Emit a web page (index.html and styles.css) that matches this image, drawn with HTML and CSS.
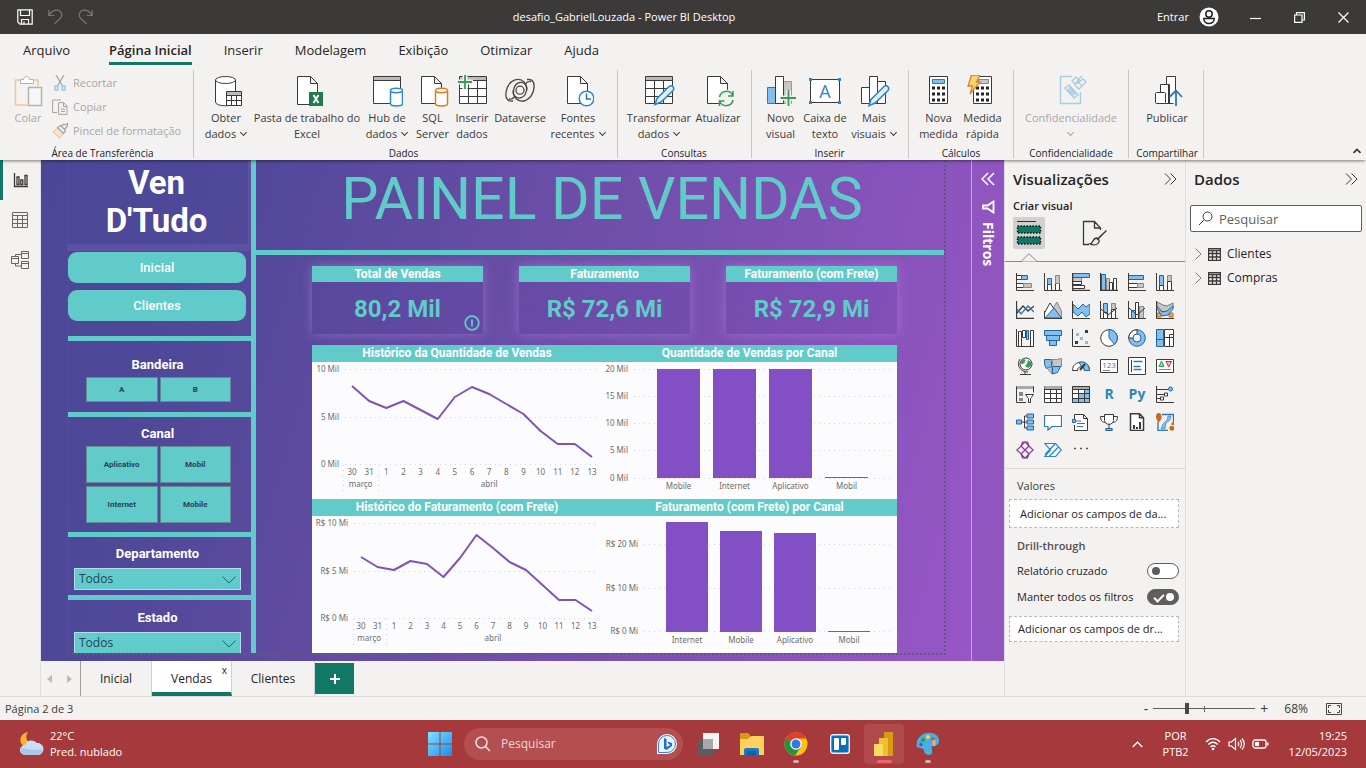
FILE: index.html
```html
<!DOCTYPE html>
<html lang="pt-BR">
<head>
<meta charset="utf-8">
<meta name="viewport" content="width=device-width, initial-scale=1">
<title>desafio_GabrielLouzada - Power BI Desktop</title>
<link rel="stylesheet" href="styles.css">
</head>
<body>
<header class="titlebar">
  <div class="quick">
    <button aria-label="Salvar"><svg width="16" height="16" viewBox="0 0 16 16"><path class="ln" d="M.8.8h14.4v14.4H3L.8 13zM3.500 1v5.500h9V1M4.500 15v-4.500h7V15M7 15v-2.500"/></svg></button>
    <button class="dim" aria-label="Desfazer"><svg width="15" height="16" viewBox="0 0 15 16"><path class="ln" d="M.8 1v5.500h5.500M1 6.300C3 3 6 .8 9.500 1.200c4 .6 5.500 5 3 8L6.500 15"/></svg></button>
    <button class="dim" aria-label="Refazer"><svg width="15" height="16" viewBox="0 0 15 16"><path class="ln" d="M14.200 1v5.500H8.700M14 6.300C12 3 9 .8 5.500 1.200c-4 .6-5.500 5-3 8L8.500 15"/></svg></button>
  </div>
  <h1 class="doc-title">desafio_GabrielLouzada - Power BI Desktop</h1>
  <div class="account">
    <button class="signin">Entrar
      <svg width="20" height="20" viewBox="0 0 20 20"><circle cx="10" cy="10" r="9.500" fill="#fff"/><circle cx="10" cy="7" r="3.200" fill="none" stroke="#222" stroke-width="1.500"/><path d="M4.800 11.500h10.400c0 3-2.200 5-5.200 5s-5.200-2-5.200-5z" fill="none" stroke="#222" stroke-width="1.500"/></svg>
    </button>
    <button class="win" aria-label="Minimizar"><svg width="11" height="11" viewBox="0 0 11 11"><path class="ln" d="M0 6.500h11"/></svg></button>
    <button class="win" aria-label="Restaurar"><svg width="11" height="11" viewBox="0 0 11 11"><path class="ln" d="M.6 3h7.400v7.400H.6zM2.500 3V.6h7.900V8H8"/></svg></button>
    <button class="win" aria-label="Fechar"><svg width="11" height="11" viewBox="0 0 11 11"><path class="ln" d="M.5.5l10 10M10.500.5l-10 10"/></svg></button>
  </div>
</header>

<nav class="tabs">
  <button class="file">Arquivo</button>
  <button class="on">Página Inicial</button>
  <button>Inserir</button>
  <button>Modelagem</button>
  <button>Exibição</button>
  <button>Otimizar</button>
  <button>Ajuda</button>
</nav>

<section class="ribbon" aria-label="Faixa de opções">
  <div class="group clip">
    <div class="tools">
      <button class="tool off"><svg width="32" height="32" viewBox="0 0 32 32"><path d="M9 5H3.500v25H15M21 5h5v6" fill="none" stroke="#f0c896" stroke-width="1.500"/><path d="M8.500 8.500v-4h3c0-4 6-4 6 0h4v4z" fill="#fff" stroke="#b5b3b1"/><path d="M16.500 12.500h13v18h-13z" fill="#f8f7f7" stroke="#b5b3b1" stroke-width="1.500"/></svg><span>Colar</span></button>
      <div class="small-tools">
        <button><svg width="16" height="16" viewBox="0 0 16 16"><path d="M4 0l6.500 11M12 0L5.500 11" fill="none" stroke="#a5a3a1" stroke-width="1.300"/><path d="M3 11h3v4H3zM10 11h3v4h-3z" fill="#d8eaf6" stroke="#9cc8e4" stroke-width="1.300"/></svg>Recortar</button>
        <button><svg width="16" height="16" viewBox="0 0 16 16"><path d="M5 13.500H.6V1H9M6.600 3.600h5L15 7v8.400H6.600zM11.500 4v3.500H15M9 10h4M9 12.500h4" fill="none" stroke="#a5a3a1"/></svg>Copiar</button>
        <button><svg width="16" height="16" viewBox="0 0 16 16"><path d="M6 5l5 5-3.500 5L1 9z" fill="#f8e5cc" stroke="#e9bd85"/><path d="M5.500 4.500l3-2 5 5-2 3zM9.500 3.500L12 .8M12.500 6.500L15.500 3V.6L12.500 2" fill="none" stroke="#a5a3a1" stroke-width="1.300"/></svg>Pincel de formatação</button>
      </div>
    </div>
    <div class="caption">Área de Transferência</div>
  </div>

  <div class="group data">
    <div class="tools">
      <button class="tool t52"><svg width="32" height="32" viewBox="0 0 32 32"><path class="wk" d="M5.500 5v22c0 5 20 5 20 0V5"/><ellipse class="wk" cx="15.500" cy="5" rx="10" ry="3.500"/><path class="wk" d="M16.500 16.500h15v14h-15z"/><path d="M17 17h14v3H17z" fill="#bbb"/><path class="k" d="M16.500 20.500h15M16.500 25.500h15M21.500 20.500v10M26.500 20.500v10"/></svg><span>Obter<br>dados<i class="chev"></i></span></button>
      <button class="tool t110"><svg width="32" height="32" viewBox="0 0 32 32"><path class="wk" d="M6.500 1.500h13l7 7v21h-20zM19.500 1.500v7h7"/><path d="M18 17h14v14H18z" fill="#1e7d49"/><path d="M22.500 20l5 8M27.500 20l-5 8" stroke="#fff" stroke-width="2" fill="none"/></svg><span>Pasta de trabalho do<br>Excel</span></button>
      <button class="tool t50"><svg width="32" height="32" viewBox="0 0 32 32"><path class="wk" d="M2.500 1.500h27v27h-27z"/><path d="M3 2h26v3H3z" fill="#bbb"/><path class="k" d="M2.500 5.500h27"/><path class="cyl" d="M19.500 16v13c0 2.500 12 2.500 12 0V16"/><ellipse class="cyl" cx="25.500" cy="15.500" rx="6" ry="2.200"/></svg><span>Hub de<br>dados<i class="chev"></i></span></button>
      <button class="tool t41"><svg width="32" height="32" viewBox="0 0 32 32"><path class="wk" d="M4.500 1.500h13l7 7v20h-20zM17.500 1.500v7h7"/><path class="cyl org" d="M18.500 16v13c0 2.500 12 2.500 12 0V16"/><ellipse class="cyl org" cx="24.500" cy="15.500" rx="6" ry="2.200"/></svg><span>SQL<br>Server</span></button>
      <button class="tool t38"><svg width="32" height="32" viewBox="0 0 32 32"><path class="wk" d="M3.500 1.500h27v27h-27z"/><path d="M4 2h26v3H4z" fill="#bbb"/><path class="k" d="M3.500 5.500h27M3.500 13.500h27M3.500 21.500h27M12.500 5.500v23M21.500 5.500v23"/><path d="M9-1v16M1 7h16" stroke="#f3f2f1" stroke-width="5"/><path d="M9 0v14M2 7h14" stroke="#3a9b56" stroke-width="1.800"/></svg><span>Inserir<br>dados</span></button>
      <button class="tool t58"><svg width="32" height="32" viewBox="0 0 32 32"><g fill="none" stroke="#4a4846" stroke-width="1.300"><path d="M9 26C2 27 1 21 2.500 15 5 5 15 1.500 20 7c5 6 2 15-4 16-5 .5-8-4-6.500-8"/><path d="M5 24c5 1 5-3 6-3"/><path d="M23 4.500c7-1 8 5 6.500 11C27 25.500 17 29 12 23.500c-5-6-2-15 4-16 5-.5 8 4 6.500 8"/><path d="M27 6.500c-5-1-5 3-6 3"/><circle cx="16" cy="15.200" r="4"/></g></svg><span>Dataverse</span></button>
      <button class="tool t58"><svg width="32" height="32" viewBox="0 0 32 32"><path class="wk" d="M5.500 1.500h13l7 7v20h-20zM18.500 1.500v7h7"/><circle cx="24.500" cy="23.500" r="7.300" fill="#fff" stroke="#2f86c8" stroke-width="1.500"/><path d="M24.500 18.500v5.500h4.500" fill="none" stroke="#2f6fa0" stroke-width="1.500"/></svg><span>Fontes<br>recentes<i class="chev"></i></span></button>
    </div>
    <div class="caption">Dados</div>
  </div>

  <div class="group query">
    <div class="tools">
      <button class="tool t68"><svg width="32" height="32" viewBox="0 0 32 32"><path class="wk" d="M2.500 1.500h27v27h-27z"/><path d="M3 2h26v3H3z" fill="#bbb"/><path class="k" d="M2.500 5.500h27M2.500 13.500h27M2.500 21.500h27M11.500 5.500v23M20.500 5.500v23"/><path class="pen" d="M12 29.500l2-6 12-12c3-2 6 1 4 4L18 27z"/></svg><span>Transformar<br>dados<i class="chev"></i></span></button>
      <button class="tool t50"><svg width="32" height="32" viewBox="0 0 32 32"><path class="wk" d="M5.500 1.500h13l7 7v20h-20zM18.500 1.500v7h7"/><circle cx="24.500" cy="23.500" r="9" fill="#f3f2f1"/><path d="M17.500 22a7 7 0 0 1 13-2M31 16v5h-5M31 25a7 7 0 0 1-13 2M17.500 31v-5h5" fill="none" stroke="#3a9b56" stroke-width="1.500"/></svg><span>Atualizar</span></button>
    </div>
    <div class="caption">Consultas</div>
  </div>

  <div class="group insert">
    <div class="tools">
      <button class="tool t41"><svg width="32" height="32" viewBox="0 0 32 32"><path d="M2.500 12.500h8v16h-8z" fill="#83beec" stroke="#2f78b4"/><path d="M18.500 6.500h8v22h-8z" fill="#c8c6c4" stroke="#999"/><path class="wk" d="M10.500 1.500h8v27h-8z"/><path d="M23.500 15v16M15.500 23h15" stroke="#f3f2f1" stroke-width="5"/><path d="M23.500 15v16M15.500 23h15.500" stroke="#3a9b56" stroke-width="1.800"/></svg><span>Novo<br>visual</span></button>
      <button class="tool t48"><svg width="32" height="32" viewBox="0 0 32 32"><path class="wk" d="M1.500 4.500h29v23h-29z"/><path d="M0 3h3v3H0zM29 3h3v3h-3zM0 26h3v3H0zM29 26h3v3h-3z" fill="#2f86c8"/><text x="16" y="23" text-anchor="middle" font-size="18" fill="#2f86c8">A</text></svg><span>Caixa de<br>texto</span></button>
      <button class="tool t50"><svg width="32" height="32" viewBox="0 0 32 32"><path class="wk" d="M3.500 12.500h8v16h-8zM19.500 6.500h8v22h-8zM11.500 1.500h8v27h-8z"/><path class="pen" d="M11 30.500l2-6 13-13c3-2 6 1 4 4L17 28z"/></svg><span>Mais<br>visuais<i class="chev"></i></span></button>
    </div>
    <div class="caption">Inserir</div>
  </div>

  <div class="group calc">
    <div class="tools">
      <button class="tool t43"><svg width="32" height="32" viewBox="0 0 32 32"><path class="wk" d="M6.500 1.500h18v27h-18z"/><path d="M9.500 4.500h12v4h-12z" fill="#83beec" stroke="#2f78b4"/><path class="keys" d="M9 13h13M9 19h13M9 25h13"/></svg><span>Nova<br>medida</span></button>
      <button class="tool t45"><svg width="32" height="32" viewBox="0 0 32 32"><path class="wk" d="M6.500 1.500h18v27h-18z"/><path d="M11.500 4.500h10v4h-10z" fill="#c8c6c4" stroke="#888"/><path class="keys" d="M9 13h13M9 19h13M9 25h13"/><path d="M4.500 0H13L9.500 7H13L3 19l2.500-8H1z" fill="#ffd36b" stroke="#d9822b" stroke-width="1.300"/></svg><span>Medida<br>rápida</span></button>
    </div>
    <div class="caption">Cálculos</div>
  </div>

  <div class="group conf">
    <div class="tools">
      <button class="tool off t100"><svg width="32" height="32" viewBox="0 0 32 32"><g fill="none" stroke="#a9cde3" stroke-width="1.400"><path d="M17 1.500H5.500v27h20V17"/><path d="M10 13l4-3 9 10-4 3zM13 14l6 6.500M14 12l6 7"/><path d="M17 6l4-4 3 3-4 4zM22 6l5-5M20 10l4 4 3-3-4-4zM26 12l5-5-3-3-5 4"/></g></svg><span>Confidencialidade<br><i class="chev solo"></i></span></button>
    </div>
    <div class="caption">Confidencialidade</div>
  </div>

  <div class="group share">
    <div class="tools">
      <button class="tool t46"><svg width="32" height="32" viewBox="0 0 32 32"><path class="wk" d="M15.500 1.500h9v27h-7v-19h-2zM9.500 9.500h9v19h-9z"/><rect class="wk" x="4.500" y="17.500" width="10" height="11" rx="1"/><path d="M25 16v15" stroke="#f3f2f1" stroke-width="5"/><path d="M25 31V16M18.500 22l6.500-6.500 6 6.500" fill="none" stroke="#2f78b4" stroke-width="1.800"/></svg><span>Publicar</span></button>
    </div>
    <div class="caption">Compartilhar</div>
  </div>
  <button class="collapse" aria-label="Recolher faixa"><svg width="8" height="6" viewBox="0 0 8 6"><path d="M.5 5L4 1.500 7.500 5" fill="none" stroke="#333" stroke-width="1.600"/></svg></button>
</section>

<div class="work">
  <nav class="rail">
    <button class="on" aria-label="Relatório"><svg width="16" height="16" viewBox="0 0 16 16"><path class="k" stroke-width="1.300" d="M1.500 1v13.500H15M4 5h2v7.500H4zM7.800 8h2v4.500h-2zM12 3.500h2v9h-2z"/></svg></button>
    <button aria-label="Dados"><svg width="16" height="16" viewBox="0 0 16 16"><path fill="none" stroke="#666" d="M.5.5h15v15H.5zM.5 3.500h15M.5 7.500h15M.5 11.500h15M5.500 3.500v12M10.500 3.500v12"/></svg></button>
    <button aria-label="Modelo"><svg width="18" height="18" viewBox="0 0 18 18"><path fill="none" stroke="#666" d="M.5 5.500h7v7h-7zM.5 7.500h7M10.500.5h7v7h-7zM10.500 2.500h7M10.500 10.500h7v7h-7zM10.500 12.500h7M4.500 5.500v-2h6M4.500 12.500v2.500h6"/></svg></button>
  </nav>

  <div class="center">
    <div class="stage">
      <main class="canvas">
        <div class="page">
          <aside class="side">
            <h2 class="brand">Ven<br>D'Tudo</h2>
            <div class="links">
              <button>Inicial</button>
              <button>Clientes</button>
            </div>
            <section class="slicer flag">
              <h3>Bandeira</h3>
              <div class="tiles"><button>A</button><button>B</button></div>
            </section>
            <section class="slicer channel">
              <h3>Canal</h3>
              <div class="tiles tall"><button>Aplicativo</button><button>Mobil</button><button>Internet</button><button>Mobile</button></div>
            </section>
            <section class="slicer dept">
              <h3><label for="dept">Departamento</label></h3>
              <div class="drop"><select id="dept"><option>Todos</option></select><svg width="14" height="8" viewBox="0 0 14 8"><path d="M.5.5L7 7 13.500.5" fill="none" stroke="#2b5f73"/></svg></div>
            </section>
            <section class="slicer state">
              <h3><label for="state">Estado</label></h3>
              <div class="drop"><select id="state"><option>Todos</option></select><svg width="14" height="8" viewBox="0 0 14 8"><path d="M.5.5L7 7 13.500.5" fill="none" stroke="#2b5f73"/></svg></div>
            </section>
          </aside>
          <div class="report">
            <h2 class="headline">PAINEL DE VENDAS</h2>
            <div class="body">
              <div class="cards">
                <article class="card"><h3>Total de Vendas</h3><p>80,2 Mil</p><svg class="info" width="16" height="16" viewBox="0 0 16 16"><circle cx="8" cy="8" r="6.800" fill="none" stroke="#60cbc9" stroke-width="1.800"/><path d="M8 4.500v7" stroke="#60cbc9" stroke-width="1.800"/></svg></article>
                <article class="card"><h3>Faturamento</h3><p>R$ 72,6 Mi</p></article>
                <article class="card"><h3>Faturamento (com Frete)</h3><p>R$ 72,9 Mi</p></article>
              </div>
              <div class="charts">
                <figure><figcaption>Histórico da Quantidade de Vendas</figcaption><svg id="qty-line" viewBox="0 0 290 137"></svg></figure>
                <figure><figcaption>Quantidade de Vendas por Canal</figcaption><svg id="qty-bar" viewBox="0 0 295 137"></svg></figure>
                <figure><figcaption>Histórico do Faturamento (com Frete)</figcaption><svg id="rev-line" viewBox="0 0 290 137"></svg></figure>
                <figure><figcaption>Faturamento (com Frete) por Canal</figcaption><svg id="rev-bar" viewBox="0 0 295 137"></svg></figure>
              </div>
            </div>
          </div>
        </div>
      </main>
      <aside class="filters">
        <button aria-label="Expandir filtros"><svg width="14" height="14" viewBox="0 0 14 14"><path d="M7 1L1 7l6 6M13 1L7 7l6 6" fill="none" stroke="#fff" stroke-width="1.500"/></svg></button>
        <svg width="14" height="14" viewBox="0 0 14 14"><path d="M12.500 1.500v11L6.500 8.500H2v-3h4.500z" fill="none" stroke="#fff" stroke-width="1.800"/></svg>
        <span>Filtros</span>
      </aside>
    </div>
    <nav class="sheets">
      <button class="arrow" aria-label="Anterior"><svg width="5" height="8" viewBox="0 0 5 8"><path d="M5 0v8L0 4z" fill="#bdbbb9"/></svg></button>
      <button class="arrow last" aria-label="Próxima"><svg width="5" height="8" viewBox="0 0 5 8"><path d="M0 0v8l5-4z" fill="#bdbbb9"/></svg></button>
      <button class="sheet first">Inicial</button>
      <button class="sheet on">Vendas<i>x</i></button>
      <button class="sheet">Clientes</button>
      <button class="add" aria-label="Nova página"><svg width="12" height="12" viewBox="0 0 12 12"><path d="M6 1v10M1 6h10" stroke="#fff" stroke-width="2"/></svg></button>
    </nav>
  </div>

  <aside class="pane viz">
    <header><h2>Visualizações</h2><button aria-label="Recolher"><svg width="13" height="12" viewBox="0 0 13 12"><path class="k" d="M1 .5L6.500 6 1 11.500M6.500.5L12 6l-5.500 5.500"/></svg></button></header>
    <h3 class="make">Criar visual</h3>
    <div class="modes">
      <button class="on" aria-label="Criar visual"><svg width="26" height="26" viewBox="0 0 26 26"><path d="M1 1.500h19" stroke="#333"/><path d="M1.500 6h23v7h-23zM1.500 17h23v7h-23z" fill="#117865" stroke="#111" stroke-width="1.400" stroke-dasharray="1.500 1.500"/></svg></button>
      <button aria-label="Formatar visual"><svg width="26" height="26" viewBox="0 0 26 26"><path class="k" stroke-width="1.300" d="M7 24.500H1.500V1.500h11L18.500 8v2M12.500 1.500V8h6M24.500 10.500L15 20M24.500 10.500l-8 7.500M15 18c-5 0-3 5-7 6 5 2 10 0 9-4z"/></svg></button>
    </div>
    <svg class="notch" width="16" height="9" viewBox="0 0 16 9"><path d="M0 8.500L8 .7l8 7.800" fill="#f3f2f1" stroke="#8a8886"/></svg>
    <div class="kinds">
      <button aria-label="Barras empilhadas"><svg viewBox="0 0 18 18"><path class="wk" d="M.5 2.500h5v4h-5zM.5 10.500h7v4h-7z"/><path class="b" d="M5.500 2.500h6v4h-6z"/><path class="g" d="M7.500 10.500h8v4h-8z"/><path class="k" d="M.5 0v17.500H18"/></svg></button>
      <button aria-label="Colunas empilhadas"><svg viewBox="0 0 18 18"><path class="wk" d="M3.500 10.500h4v7h-4zM11.500 9.500h4v8h-4z"/><path class="b" d="M3.500 5.500h4v6h-4z"/><path class="g" d="M11.500 2.500h4v8h-4z"/><path class="k" d="M.5 0v17.500H18"/></svg></button>
      <button aria-label="Barras clusterizadas"><svg viewBox="0 0 18 18"><path class="g" d="M.5 4.500h9v4h-9z"/><path class="b" d="M.5.5h17v4H.5z"/><path class="wk" d="M.5 8.500h9v3h-9zM.5 12.500h12v3H.5z"/><path class="k" d="M.5 0v17.500H18" stroke-width="1.600"/></svg></button>
      <button aria-label="Colunas clusterizadas"><svg viewBox="0 0 18 18"><path class="b" d="M1.500 1.500h4v16h-4z"/><path class="g" d="M6.500 5.500h3v12h-3z"/><path class="wk" d="M9.500 9.500h3v8h-3zM13.500 5.500h3v12h-3z"/><path class="k" d="M.5 0v17.500H18" stroke-width="1.600"/></svg></button>
      <button aria-label="Barras 100%"><svg viewBox="0 0 18 18"><path class="b" d="M.5 2.500h15v4H.5z"/><path class="wk" d="M.5 10.500h9v4h-9z"/><path class="g" d="M9.500 10.500h6v4h-6z"/><path class="k" d="M.5 0v17.500H18"/></svg></button>
      <button aria-label="Colunas 100%"><svg viewBox="0 0 18 18"><path class="b" d="M3.500 2.500h4v10h-4z"/><path class="g" d="M11.500 2.500h4v6h-4z"/><path class="wk" d="M3.500 12.500h4v5h-4zM11.500 8.500h4v9h-4z"/><path class="k" d="M.5 0v17.500H18"/></svg></button>

      <button aria-label="Linhas"><svg viewBox="0 0 18 18"><path class="k" stroke-width="1.300" d="M.5 0v17.500H18M1 12l6-7 5 5 6-5"/><path d="M1 8l4 5 7-8 6 6" fill="none" stroke="#2f78b4" stroke-width="1.400"/></svg></button>
      <button aria-label="Área"><svg viewBox="0 0 18 18"><path class="g" d="M8 8l5-7 4.500 9v7H8z"/><path class="wk" d="M.5 12L6 2l6 9v6H.5z"/><path class="b" d="M1 17l9-10 7.500 10z"/><path class="k" d="M.5 10v7.500H18"/></svg></button>
      <button aria-label="Área empilhada"><svg viewBox="0 0 18 18"><path class="b" d="M1 3l5 5 5-5 3 3 4-3v10l-4 3-4-5-4 4-5-4z"/><path class="k" d="M.5 0v17.500H18"/></svg></button>
      <button aria-label="Linhas e colunas"><svg viewBox="0 0 18 18"><path class="b" d="M3.500 2.500h4v9h-4z"/><path class="g" d="M11.500 2.500h4v6h-4z"/><path class="wk" d="M3.500 11.500h4v6h-4zM11.500 8.500h4v9h-4z"/><path class="k" d="M.5 0v17.500H18M1 8l7 6 9-7"/></svg></button>
      <button aria-label="Linhas e colunas clusterizadas"><svg viewBox="0 0 18 18"><path class="b" d="M3.500 9.500h4v8h-4z"/><path class="g" d="M11.500 5.500h4v12h-4z"/><path class="wk" d="M7.500 1.500h3v16h-3z"/><path class="k" d="M.5 0v17.500H18M1 7l8 7 8-7"/></svg></button>
      <button aria-label="Faixas"><svg viewBox="0 0 18 18"><path d="M1 1l6 3 4 1 6-3v5l-6 5-4-1-6-4z" fill="#c8c6c4" stroke="#777"/><path d="M1 12h4v4H1zM13 12h4v4h-4z" fill="#f5a64f" stroke="#c5691c"/><path class="b" d="M1 5l5 6 5-1 6-5v3l-5 6-6 1-5-7z"/><path class="k" d="M.5 0v17.500H18"/></svg></button>

      <button aria-label="Cascata"><svg viewBox="0 0 18 18"><path class="wk" d="M2.500 2.500h3v15h-3zM6.500 1.500h3v7h-3zM14.500 1.500h3v16h-3z"/><path class="b" d="M10.500 1.500h2v9h-2z"/><path class="k" d="M.5 0v17.500H18"/></svg></button>
      <button aria-label="Funil"><svg viewBox="0 0 18 18"><path class="b" d="M.5 1.500h17v5H.5zM2.500 6.500h13v5h-13zM5.500 11.500h7v5h-7z"/></svg></button>
      <button aria-label="Dispersão"><svg viewBox="0 0 18 18"><path d="M13 1h3v3h-3zM3 12h3v3H3z" fill="#3b3a39"/><path d="M4 4h3v3H4zM8 8h3v3H8zM13 12h3v3h-3z" fill="#8dbbe0"/><path class="k" d="M.5 0v17.500H18"/></svg></button>
      <button aria-label="Pizza"><svg viewBox="0 0 18 18"><circle class="wk" cx="9" cy="9" r="8.300"/><path class="b" d="M9 .7a8.300 8.300 0 0 1 5.500 14.500L9 9z"/></svg></button>
      <button aria-label="Rosca"><svg viewBox="0 0 18 18"><circle class="b" cx="9" cy="9" r="8.300"/><path class="wk" d="M9 .7V5L5 9H.7A8.300 8.300 0 0 1 9 .7z"/><circle cx="9" cy="9" r="4" fill="#f3f2f1" stroke="#2266a0"/></svg></button>
      <button aria-label="Treemap"><svg viewBox="0 0 18 18"><path class="b" d="M.5.5h7v17h-7z"/><path class="wk" d="M8.500.5h9v8h-9zM8.500 8.500h5v9h-5zM13.500 5.500h4v12h-4z"/><path d="M0 10.500h8" stroke="#2266a0"/></svg></button>

      <button aria-label="Mapa"><svg viewBox="0 0 18 18"><circle cx="10" cy="7" r="6" fill="#fff" stroke="#3b3a39"/><path d="M7 2c2 0 3 1 2 3S5 8 5 6s1-3 2-4zM12 3l3 2v4l-3 2-3-2 2-2z" fill="#3a9b56"/><path class="k" d="M4 2C0 8 4 15 12 15M9 15v2.500M4 17.500h11"/></svg></button>
      <button aria-label="Mapa coroplético"><svg viewBox="0 0 18 18"><path class="b" d="M.5 2.500h7v7l-5 2-2-4z"/><path class="g" d="M7.500 2.500h5l5-1v8h-8zM3 11l5-1v7z"/><path class="b" d="M8.500 9.500l8 0-3 6-5 1.500z"/></svg></button>
      <button aria-label="Medidor"><svg viewBox="0 0 18 18"><path class="wk" d="M.5 13.500c0-11 17-11 17 0h-5c0-5-7-5-7 0z"/><path class="b" d="M7 5.500c5-2 10 1 10.500 8h-5c0-2-1-4-3-4z"/><path class="k" stroke-width="2" d="M8 13l5-6"/></svg></button>
      <button aria-label="Cartão"><svg viewBox="0 0 18 18"><path class="wk" d="M.5 2.500h17v13H.5z"/><path d="M3 13.500h7" stroke="#888"/><text x="9" y="11" text-anchor="middle" font-size="8" fill="#2f78b4">123</text></svg></button>
      <button aria-label="Cartão de várias linhas"><svg viewBox="0 0 18 18"><path class="wk" d="M.5.5h17v17H.5z"/><path d="M3.500 3v12" stroke="#3b3a39"/><path d="M5.500 4.500h9M5.500 9.500h7M5.500 12.500h8" stroke="#2f78b4" stroke-width="1.500"/></svg></button>
      <button aria-label="KPI"><svg viewBox="0 0 18 18"><path class="wk" d="M.5 2.500h17v13H.5z"/><path d="M3 9.500L5.500 4 8 9.500z" fill="#9bd0a8" stroke="#3a9b56"/><path d="M10 4.500h5.500L12.700 10z" fill="#f6b8bb" stroke="#d13438"/><path d="M3 12.500h12" stroke="#888"/></svg></button>

      <button aria-label="Segmentação"><svg viewBox="0 0 18 18"><path class="k" d="M10 17.500H.5V1.500h17v6"/><path d="M1 1h16v3H1z" fill="#aaa"/><path d="M3 7h4v4H3zM3 13h4v3H3z" fill="#888"/><path class="wk" d="M9.500 9.500h8l-3 4v4h-2v-4z"/></svg></button>
      <button aria-label="Tabela"><svg viewBox="0 0 18 18"><path class="wk" d="M.5 1.500h17v16H.5z"/><path d="M.5 1h17v3H.5z" fill="#aaa"/><path class="k" d="M.5 4.500h17M.5 8.500h17M.5 13.500h17M6.500 4.500v13M12.500 4.500v13"/></svg></button>
      <button aria-label="Matriz"><svg viewBox="0 0 18 18"><path class="wk" d="M.5 1.500h17v16H.5z"/><path d="M6 5h11v12H1v-4h5z" fill="#83beec"/><path d="M6 4h6v5H6z" fill="#fff"/><path d="M.5 1h17v3H.5z" fill="#aaa"/><path class="k" d="M.5 4.500h17M.5 8.500h17M.5 13.500h17M6.500 4.500v13M12.500 4.500v13M.5 1.500h17v16H.5z"/></svg></button>
      <button aria-label="Script R" class="script">R</button>
      <button aria-label="Script Python" class="script">Py</button>
      <button aria-label="Influenciadores"><svg viewBox="0 0 18 18"><path class="k" d="M.5 1v16.500H18M1 4.500h11M1 9.500h8M1 13.500h4"/><circle class="b" cx="14.500" cy="4" r="2"/><path class="wk" d="M8.500 8h3v3h-3zM4.500 12h3v3h-3z"/></svg></button>

      <button aria-label="Árvore hierárquica"><svg viewBox="0 0 18 18"><path class="k" d="M6 9h5M8.500 9V3H11M8.500 9v6H11"/><path class="b" d="M.5 7h5v4h-5zM11 1h6.500v4H11zM11 7h6.500v4H11zM11 13h6.500v4H11z"/></svg></button>
      <button aria-label="Perguntas e respostas"><svg viewBox="0 0 18 18"><path d="M.5 2.500h17v11H8l-4 3.500v-3.500H.5z" fill="#fff" stroke="#2f78b4" stroke-width="1.200"/></svg></button>
      <button aria-label="Narrativa"><svg viewBox="0 0 18 18"><path class="wk" d="M2.500 6V1.500h9l4 4v12h-13V12M11.500 1.500v4h4"/><path d="M.5 6.500h3v3h-3z" class="b"/><path d="M5 10.500h8M5 13.500h6M3.500 8H9" stroke="#2f78b4"/></svg></button>
      <button aria-label="Metas"><svg viewBox="0 0 18 18"><path class="wk" d="M4.500 1.500h9v6c0 5-9 5-9 0zM4.500 3.500h-4c0 4 2 6 5 6M13.500 3.500h4c0 4-2 6-5 6M9 11v4M6 15.500h6v2H6z"/><path d="M6 15.500h6v2H6z" class="b"/></svg></button>
      <button aria-label="Relatório paginado"><svg viewBox="0 0 18 18"><path class="wk" stroke-width="1.500" d="M2.500.8h9l4 4v12.700h-13zM11.500.8v4h4"/><path d="M5 12h2v4H5zM8 14h2v2H8zM11 9h2v7h-2z" fill="#3b3a39"/></svg></button>
      <button aria-label="ArcGIS"><svg viewBox="0 0 18 18"><path d="M6 1.500h11.500v8M2 9v8.500h10" fill="none" stroke="#2f78b4" stroke-width="1.400"/><path d="M12 3l3 0-1 4-4 3-1 6H5l2-5 4-4z" fill="#83beec" stroke="#2f78b4" stroke-width=".6"/><path d="M2.800 9.500C-1.500 5-.5 0 2.800 0S7 5 2.800 9.500zM13.300 15.200a2.500 2.500 0 1 0 5 0 2.500 2.500 0 0 0-5 0zM15.500 9.500H18V12h-2.500z" fill="#c96a18"/></svg></button>

      <button aria-label="Power Apps"><svg viewBox="0 0 18 18"><path d="M9 .9L13 5 9 9 5 5zM9 9l4 4-4 4.100L5 13zM5 5l4 4-4 4-4.100-4zM13 5l4.100 4L13 13 9 9zM5 5l1.500-4h5L13 5M5 13l1.500 4h5l1.500-4" fill="#faf0fb" stroke="#8a3b96" stroke-width="1.200"/></svg></button>
      <button aria-label="Power Automate"><svg viewBox="0 0 18 18"><path d="M.7 2.500h11L17.300 9l-5.600 6.500H.7L6.500 9zM1 13.500L11 3M5 15.500L14.500 6" fill="#f2f9ff" stroke="#2f86c8" stroke-width="1.200"/></svg></button>
      <button aria-label="Mais opções"><svg viewBox="0 0 18 18"><path d="M2 7.500h2M8 7.500h2M14 7.500h2" stroke="#555" stroke-width="1.600"/></svg></button>
    </div>
    <div class="wells">
      <h4>Valores</h4>
      <button class="well big">Adicionar os campos de da...</button>
      <h4 class="bold">Drill-through</h4>
      <label class="switch">Relatório cruzado<input type="checkbox" role="switch"></label>
      <label class="switch">Manter todos os filtros<input type="checkbox" role="switch" checked></label>
      <button class="well">Adicionar os campos de dr...</button>
    </div>
  </aside>

  <aside class="pane fields">
    <header><h2>Dados</h2><button aria-label="Recolher"><svg width="13" height="12" viewBox="0 0 13 12"><path class="k" d="M1 .5L6.500 6 1 11.500M6.500.5L12 6l-5.500 5.500"/></svg></button></header>
    <label class="find"><svg width="15" height="15" viewBox="0 0 15 15"><path class="k" d="M1 14l5-5"/><circle class="k" cx="9.500" cy="5.500" r="4.500"/></svg><input type="search" placeholder="Pesquisar" aria-label="Pesquisar"></label>
    <ul class="tree">
      <li><button><svg width="7" height="12" viewBox="0 0 7 12"><path d="M.5.5L6 6 .5 11.500" fill="none" stroke="#777"/></svg><svg width="13" height="13" viewBox="0 0 13 13"><path class="k" stroke-width="1.300" d="M.6.6h11.800v11.800H.6zM.6 2.500h11.800M.6 5.500h11.800M.6 9h11.800M4.500 2v10M8.500 2v10"/></svg>Clientes</button></li>
      <li><button><svg width="7" height="12" viewBox="0 0 7 12"><path d="M.5.5L6 6 .5 11.500" fill="none" stroke="#777"/></svg><svg width="13" height="13" viewBox="0 0 13 13"><path class="k" stroke-width="1.300" d="M.6.6h11.800v11.800H.6zM.6 2.500h11.800M.6 5.500h11.800M.6 9h11.800M4.500 2v10M8.500 2v10"/></svg>Compras</button></li>
    </ul>
  </aside>
</div>

<footer class="status">
  <span>Página 2 de 3</span>
  <div class="zoom">
    <button aria-label="Reduzir">-</button>
    <input type="range" min="0" max="100" value="32" aria-label="Zoom">
    <button aria-label="Ampliar">+</button>
    <span class="pct">68%</span>
    <button aria-label="Ajustar à página"><svg width="16" height="12" viewBox="0 0 16 12"><path fill="none" stroke="#444" d="M.5.5h15v11H.5z"/><path fill="none" stroke="#444" d="M5 2.500H2.500V5M11 2.500h2.500V5M5 9.500H2.500V7M11 9.500h2.500V7"/></svg></button>
  </div>
</footer>

<footer class="taskbar">
  <button class="weather">
    <svg width="28" height="26" viewBox="0 0 28 26"><path d="M11 1c-4 5-1 12 7 12-2 4-11 5-14-1C2 7 5 2 11 1z" fill="#f7b32b"/><path d="M8 24a5 5 0 0 1 0-10 7 7 0 0 1 12-2 6 6 0 1 1 1 12z" fill="#c9ddf5"/><path d="M8 24a5 5 0 0 1-3-8c4 4 14 2 21 3-1 3-3 5-5 5z" fill="#a9c6ec"/></svg>
    <span>22°C<br>Pred. nublado</span>
  </button>
  <div class="apps">
    <button aria-label="Iniciar"><svg width="24" height="24" viewBox="0 0 24 24"><defs><linearGradient id="wg" x1="0" y1="0" x2="1" y2="1"><stop offset="0" stop-color="#7fe3ff"/><stop offset="1" stop-color="#1a8cf0"/></linearGradient></defs><path d="M0 0h11.500v11.500H0zM12.500 0H24v11.500H12.500zM0 12.500h11.500V24H0zM12.500 12.500H24V24H12.500z" fill="url(#wg)"/></svg></button>
    <label class="seek"><svg width="16" height="16" viewBox="0 0 16 16"><circle cx="6.500" cy="6.500" r="5.500" fill="none" stroke="#f2dede" stroke-width="1.500"/><path d="M10.500 10.500L15 15" stroke="#f2dede" stroke-width="1.500"/></svg><input type="search" placeholder="Pesquisar" aria-label="Pesquisar no Windows"><svg width="20" height="20" viewBox="0 0 20 20"><path d="M0 20V10a10 10 0 1 1 10 10z" fill="#fff"/><path d="M1.500 18.500V10a8.500 8.500 0 1 1 8.500 8.500z" fill="#eaf4ff" stroke="#3a7ee0"/><path d="M7 4l2.500 1v8l4-2-2-1-1-2.500L15 9v3l-5.500 4L7 14.500z" fill="#1b6fd6"/></svg></label>
    <button aria-label="Visão de tarefas"><svg width="24" height="24" viewBox="0 0 24 24"><path d="M7 1h16v16H7z" fill="#f4f4f4"/><path d="M1 7h16v16H1z" fill="#5c5c5c"/><path d="M7 7h10v10H7z" fill="#a8a8a8"/></svg></button>
    <button aria-label="Explorador"><svg width="24" height="24" viewBox="0 0 24 24"><path d="M0 2q0-1 1-1h7l2 2v4H0z" fill="#d99a10"/><path d="M0 7h8l3-3h13v19H0z" fill="#ffd25a"/><path d="M4 23v-5q0-2 2-2h11q2 0 2 2v5z" fill="#1b78c8"/><path d="M7 19h9v4H7z" fill="#0f5da8"/></svg></button>
    <button class="run" aria-label="Chrome"><svg width="24" height="24" viewBox="0 0 24 24"><circle cx="12" cy="12" r="11.500" fill="#fbc116"/><path d="M12 12L2 6.200A11.500 11.500 0 0 1 22 6.500H12z" fill="#e33b2e"/><path d="M2 6.200A11.500 11.500 0 0 0 11 23.500L17 14.500l-5-2.500z" fill="#229342"/><circle cx="12" cy="12" r="5.800" fill="#fff"/><circle cx="12" cy="12" r="4.500" fill="#2a7be8"/></svg></button>
    <button aria-label="Trello"><svg width="20" height="20" viewBox="0 0 20 20"><rect x=".7" y=".7" width="18.600" height="18.600" rx="2.500" fill="#0b6fb5" stroke="#e6f2fa" stroke-width="1.400"/><rect x="4" y="4" width="5" height="12" rx="1" fill="#fff"/><rect x="11" y="4" width="5" height="7" rx="1" fill="#fff"/></svg></button>
    <button class="run active" aria-label="Power BI"><svg width="24" height="24" viewBox="0 0 24 24"><path d="M12 0h9v24h-9z" fill="#d89a12"/><path d="M7 6h9v18H7z" fill="#f0bf30"/><path d="M2 12h9v12H2z" fill="#fbdc63"/></svg></button>
    <button class="run" aria-label="Paint"><svg width="24" height="24" viewBox="0 0 24 24"><path d="M12 1c7-1 12 4 11 9-1 4-4 3-6 4-3 1 0 4-1 7-2 4-8 1-8-2 0-4-5-2-7-4C-1 8 5 1 12 1z" fill="#46b0e4"/><circle cx="7" cy="8" r="2" fill="#2f9e44"/><circle cx="12" cy="5" r="2" fill="#ffd23f"/><circle cx="17" cy="7" r="2" fill="#e2572b"/><circle cx="5" cy="12.500" r="1.700" fill="#7048a8"/><path d="M16.500 8h3v6h-3z" fill="#d5b48a"/><path d="M17 14h2v8h-2z" fill="#8a4a22"/></svg></button>
  </div>
  <div class="tray">
    <svg width="11" height="7" viewBox="0 0 11 7"><path d="M.7 6L5.500 1.200 10.300 6" fill="none" stroke="#fff" stroke-width="1.300"/></svg>
    <span class="lang">POR<br>PTB2</span>
    <div class="net">
      <svg width="16" height="14" viewBox="0 0 16 14"><path d="M1 5c4-4.500 10-4.500 14 0M3.300 7.500c3-3 6.500-3 9.400 0M5.600 10c1.500-1.500 3.300-1.500 4.800 0" fill="none" stroke="#fff" stroke-width="1.300"/><circle cx="8" cy="12" r="1.300" fill="#fff"/></svg>
      <svg width="17" height="14" viewBox="0 0 17 14"><path d="M1 5h2.500L7.500 1.500v11L3.500 9H1zM10 5c1 1 1 3 0 4M12 3c2 2 2 6 0 8M14 1.500c3 3 3 8 0 11" fill="none" stroke="#fff" stroke-width="1.200"/></svg>
      <svg width="17" height="12" viewBox="0 0 17 12"><rect x="1" y="2" width="13" height="8" rx="2" fill="none" stroke="#fff" stroke-width="1.300"/><path d="M3 4h4v4H3zM15 4.500h1.500v3H15z" fill="#fff"/></svg>
    </div>
    <span class="clock">19:25<br>12/05/2023</span>
  </div>
</footer>
<script src="charts.js"></script>
</body>
</html>
```

FILE: styles.css
```css
:root {
  --teal: #60cbc9;
  --panel: #f3f2f1;
  --ink: #252423;
  --ui: "Open Sans", "Noto Sans", sans-serif;
  --din: Roboto, "Liberation Sans", sans-serif;
}
* { box-sizing: border-box; }
body {
  margin: 0;
  height: 100vh;
  display: flex;
  flex-direction: column;
  background: var(--panel);
  color: var(--ink);
  font: 11px/16px var(--ui);
  overflow: hidden;
}
button { border: 0; padding: 0; background: none; color: inherit; font: inherit; }
h1, h2, h3, h4, p, figure, ul { margin: 0; padding: 0; font-size: inherit; font-weight: 400; }
svg { display: block; flex: none; }
input { font: inherit; }

.k { fill: none; stroke: #3b3a39; }
.wk { fill: #fff; stroke: #3b3a39; }
.b { fill: #83beec; stroke: #2266a0; }
.g { fill: #c8c6c4; stroke: #8a8886; }
.ln { fill: none; stroke: currentColor; stroke-width: 1.2; }
.cyl { fill: #fff; stroke: #2f86c8; stroke-width: 1.5; }
.org { stroke: #e07a1f; }
.pen { fill: #e4f1fb; stroke: #2f86c8; stroke-width: 1.6; }
.keys { fill: none; stroke: #252423; stroke-width: 3; stroke-dasharray: 3 2; }

/* title bar */
.titlebar { display: flex; align-items: center; height: 34px; flex: none; background: #3b3a39; color: #fff; }
.quick { display: flex; gap: 15px; width: 108px; padding-left: 17px; }
.dim { color: #797775; }
.doc-title { flex: 1; text-align: center; }
.account { display: flex; align-items: center; width: 226px; padding-left: 17px; }
.signin { display: flex; align-items: center; gap: 10px; margin-right: 15px; }
.win { display: grid; place-items: center; width: 44px; height: 34px; }

/* ribbon */
.tabs { display: flex; gap: 32px; flex: none; height: 34px; padding-left: 23px; font-size: 13px; line-height: 18px; }
.tabs button { height: 31px; padding-top: 3px; border-bottom: 3px solid transparent; }
.tabs .file { margin-right: 7px; }
.tabs .on { font-weight: 600; border-color: #117865; }
.ribbon { display: flex; flex: none; height: 92px; padding-top: 2px; position: relative; z-index: 2; background: var(--panel); }
.ribbon { box-shadow: 0 2px 3px -1px rgba(0, 0, 0, .5); }
.group { display: flex; flex-direction: column; justify-content: space-between; height: 88px; padding: 0 8px; border-right: 1px solid #c8c6c4; }
.tools { display: flex; padding-top: 5px; }
.tool { display: flex; flex: none; flex-direction: column; align-items: center; gap: 3px; white-space: nowrap; color: #3b3a39; }
.tool span { margin: 0 -8px; text-align: center; }
.tool.off { color: #a8a6a4; }
.clip { width: 194px; padding: 0 0 0 12px; }
.data { padding: 0 10px 0 6px; }
.query { padding: 0 8px 0 7px; }
.insert { padding: 0 9px 0 8px; }
.conf { padding: 0 7px; }
.share { padding: 0 13px 0 15px; }
.t38 { width: 38px; } .t41 { width: 41px; } .t43 { width: 43px; } .t45 { width: 45px; } .t46 { width: 46px; }
.t48 { width: 48px; } .t50 { width: 50px; } .t52 { width: 52px; } .t58 { width: 58px; } .t68 { width: 68px; } .t100 { width: 100px; }
.t110 { width: 110px; }
.chev { display: inline-block; width: 5px; height: 5px; margin: 0 1px 3px 5px; border: solid currentColor; border-width: 0 1px 1px 0; transform: rotate(45deg); }
.chev.solo { margin-left: 0; }
.small-tools { display: flex; flex-direction: column; gap: 8px; margin-left: 8px; color: #a8a6a4; }
.small-tools button { display: flex; gap: 5px; align-items: center; white-space: nowrap; }
.caption { margin: 0 -8px; text-align: center; font-size: 10px; line-height: 10px; white-space: nowrap; }
.collapse { margin: auto 5px 6px auto; }

/* workspace */
.work { display: flex; flex: 1; min-height: 0; }
.rail { width: 41px; flex: none; border-right: 1px solid #e1dfdd; }
.rail button { display: grid; place-items: center; width: 100%; height: 40px; }
.rail .on { border-left: 3px solid #117865; padding-right: 2px; }
.center { display: flex; flex-direction: column; flex: 1; min-width: 0; }
.stage { display: flex; flex: 1; min-height: 0; background: linear-gradient(106deg, #4b4796 0%, #504898 18%, #7650ae 60%, #9b57c9 100%); }
.canvas { display: flex; flex: 1; min-width: 0; padding: 0 25px 6px 26px; }
.page { display: flex; flex: 1; min-width: 0; overflow: hidden; border: dotted #62587f; border-width: 0 2px 2px 1px; }
.side { width: 188px; flex: none; border-right: 5px solid var(--teal); font-family: var(--din); color: #fff; overflow: hidden; }
.brand { height: 91px; padding: 4px 3px 0 0; font-size: 33px; line-height: 38px; font-weight: 700; text-align: center; border-bottom: 7px solid #5e51a1; border-right: 3px solid #5e51a1; }
.links { display: grid; gap: 7px; padding: 1px 5px 15px 0; }
.links button { height: 31px; border-radius: 9px; background: var(--teal); font-size: 13px; font-weight: 500; }
.slicer { border-top: 5px solid var(--teal); text-align: center; }
.slicer h3 { padding-right: 4px; font-size: 13px; line-height: 18px; font-weight: 700; }
.flag { height: 76px; padding-top: 15px; }
.channel { height: 120px; padding-top: 8px; }
.dept { height: 63px; padding-top: 8px; }
.state { height: 63px; padding-top: 9px; }
.tiles { display: grid; grid-template-columns: 1fr 1fr; gap: 3px 2px; padding: 3px 20px 0 18px; }
.tiles button { height: 25px; border: 1px solid #5f8d96; background: var(--teal); color: #264158; font-size: 8px; line-height: 10px; font-weight: 700; }
.tall button { height: 37px; }
.drop { position: relative; margin: 5px 10px 0 6px; }
.drop select { display: block; appearance: none; width: 100%; height: 22px; padding: 0 4px; border: 1px solid #b5dcea; border-radius: 0; background: var(--teal); color: #22445c; font: 12px/18px var(--ui); }
.drop svg { position: absolute; right: 5px; top: 8px; }
.report { flex: 1; min-width: 0; }
.headline { height: 95px; padding: 4px 0 0 4px; border-bottom: 5px solid var(--teal); color: var(--teal); font: 400 59px/70px var(--din); text-align: center; white-space: nowrap; }
.body { padding: 11px 47px 0 56px; font-family: var(--din); }
.cards { display: grid; grid-template-columns: repeat(3, 1fr); gap: 36px; }
.card { position: relative; height: 68px; box-shadow: 0 0 10px rgba(190, 140, 230, .5); text-align: center; color: var(--teal); background: rgba(84, 60, 160, .15); }
.card h3 { background: var(--teal); color: #fff; font-size: 12px; line-height: 16px; font-weight: 700; }
.card p { font-size: 24px; line-height: 54px; font-weight: 700; }
.info { position: absolute; right: 3px; bottom: 3px; }
.charts { display: grid; grid-template-columns: 290fr 295fr; margin-top: 11px; background: #fcfbfd; }
.charts figcaption { height: 17px; background: var(--teal); color: #fff; font-size: 12px; line-height: 17px; font-weight: 700; text-align: center; }
.charts svg { width: 100%; height: auto; font-family: "Noto Sans", sans-serif; font-size: 8px; fill: #6f6d6b; }
.grid { stroke: #d4d2d6; stroke-dasharray: 1 4; fill: none; }
.bar { fill: #8250c4; }
.trend { fill: none; stroke: #8052ba; stroke-width: 2; stroke-linejoin: round; }
.filters { display: flex; flex-direction: column; align-items: center; gap: 14px; width: 33px; flex: none; padding-top: 12px; border-left: 1px solid #c4a3de; background: #9155c0; color: #fff; }
.filters span { writing-mode: vertical-rl; margin-top: -6px; font-size: 14px; font-weight: 700; }

/* page tabs */
.sheets { display: flex; flex: none; height: 35px; }
.arrow { display: grid; place-items: center; width: 17px; }
.arrow.last { width: 23px; border-right: 1px solid #a19f9d; }
.sheet { position: relative; width: 83px; border-right: 1px solid #d2d0ce; font-size: 12px; }
.sheet.first { width: 71px; }
.sheet.on { width: 80px; background: #fff; border-bottom: 4px solid #117865; padding-top: 4px; }
.sheet i { position: absolute; right: 4px; top: 1px; font-style: normal; font-size: 10px; }
.add { display: grid; place-items: center; width: 39px; height: 31px; margin-top: 2px; background: #117865; }

/* panes */
.pane { flex: none; width: 181px; border-left: 1px solid #e1dfdd; }
.pane header { display: flex; justify-content: space-between; align-items: center; height: 38px; padding: 0 8px; }
.pane h2 { font-size: 15px; font-weight: 600; }
.make { padding-left: 8px; font-weight: 600; }
.modes { display: flex; gap: 34px; height: 48px; padding: 3px 8px; border-bottom: 1px solid #8a8886; }
.modes button { display: grid; place-items: center; width: 32px; height: 32px; border-radius: 2px; }
.modes .on { background: #d2d0ce; }
.notch { margin: -9px 0 0 16px; }
.kinds { display: grid; grid-template-columns: repeat(6, 18px); gap: 10px; padding: 11px 0 9px 11px; border-bottom: 1px solid #dddbd9; }
.kinds button, .kinds svg { width: 18px; height: 18px; }
.script { color: #2f86b8; font-size: 14px; line-height: 18px; font-weight: 700; }
.wells { padding: 9px 6px 0 4px; }
.wells h4 { padding-left: 8px; margin-bottom: 5px; color: #3b3a39; }
.wells .bold { font-weight: 600; margin: 10px 0 4px; color: #504e4c; }
.well { display: block; width: 100%; height: 26px; border: 1px dashed #bab8b6; background: #fff; text-align: left; padding-left: 8px; margin-top: 6px; white-space: nowrap; overflow: hidden; }
.well.big { height: 29px; padding-left: 10px; margin-top: 0; }
.switch { display: flex; justify-content: space-between; align-items: center; height: 26px; padding-left: 8px; white-space: nowrap; }
.switch input { appearance: none; position: relative; flex: none; width: 32px; height: 16px; margin: 0; border: 1px solid #605e5c; border-radius: 8px; background: #fff; }
.switch input::before { content: ""; position: absolute; left: 4px; top: 3px; width: 8px; height: 8px; border-radius: 4px; background: #605e5c; }
.switch input:checked { background: #605e5c; }
.switch input:checked::before { left: 18px; background: #fff; }
.switch input:checked::after { content: ""; position: absolute; left: 6px; top: 4px; width: 8px; height: 4px; border: solid #fff; border-width: 0 0 2px 2px; transform: rotate(-45deg); }
.find { display: flex; align-items: center; gap: 6px; height: 27px; margin: 7px 4px 10px; padding-left: 7px; border: 1px solid #605e5c; border-radius: 2px; background: #fff; }
.find input { width: 100%; min-width: 0; border: 0; padding: 0; background: none; outline: 0; font-size: 13px; }
.find input::placeholder { color: #605e5c; }
.tree { list-style: none; font-size: 12px; }
.tree button { display: flex; align-items: center; gap: 6px; height: 24px; padding-left: 9px; }

/* status bar */
.status { display: flex; justify-content: space-between; align-items: center; flex: none; height: 24px; padding: 0 24px 0 5px; border-top: 1px solid #dddbd9; color: #3b3a39; }
.zoom { display: flex; align-items: center; gap: 5px; font-size: 14px; }
.zoom input { appearance: none; width: 102px; height: 12px; margin: 0; background: linear-gradient(#605e5c, #605e5c) 0 5px / 100% 1px no-repeat, linear-gradient(#605e5c, #605e5c) 50% 3px / 1px 6px no-repeat; }
.zoom input::-webkit-slider-thumb { appearance: none; width: 4px; height: 11px; background: #4a4846; }
.pct { margin: 0 13px 0 11px; font-size: 12px; }

/* taskbar */
.taskbar { display: grid; grid-template-columns: 1fr auto 1fr; align-items: center; flex: none; height: 48px; background: #a6393b; color: #fff; }
.weather { display: flex; align-items: center; gap: 5px; padding-left: 17px; text-align: left; }
.apps { display: flex; align-items: center; padding-left: 6px; }
.apps button { position: relative; display: grid; place-items: center; width: 40px; height: 40px; margin-right: 4px; border-radius: 4px; }
.seek { display: flex; align-items: center; gap: 10px; width: 219px; height: 32px; margin-right: 5px; padding: 0 6px 0 11px; border-radius: 16px; background: #b34f51; }
.seek input { flex: 1; min-width: 0; border: 0; padding: 0; background: none; outline: 0; color: #fff; font-size: 12px; }
.seek input::placeholder { color: #f0d6d6; }
.run::after { content: ""; position: absolute; bottom: 1px; left: 17px; width: 6px; height: 3px; border-radius: 2px; background: #dba5a6; }
.apps .active { background: #b04a4c; }
.active::after { left: 13px; width: 15px; background: #f0656b; }
.tray { display: flex; justify-content: flex-end; align-items: center; padding-right: 19px; text-align: right; }
.lang { margin: 0 16px 0 20px; text-align: center; }
.net { display: flex; align-items: center; gap: 7px; margin-right: 20px; }
```

FILE: charts.js
```js
const NS = "http://www.w3.org/2000/svg";

function add(svg, tag, attrs, text) {
  const node = document.createElementNS(NS, tag);
  for (const name in attrs) node.setAttribute(name, attrs[name]);
  if (text !== undefined) node.textContent = text;
  svg.appendChild(node);
}

function gridLines(svg, opts) {
  opts.ticks.forEach(([label, y]) => {
    add(svg, "text", { x: opts.left - 6, y: y + 3, "text-anchor": "end" }, label);
    add(svg, "path", { class: "grid", d: `M${opts.left} ${y}.5H${opts.right}` });
  });
}

function lineChart(id, opts) {
  const svg = document.getElementById(id);
  gridLines(svg, opts);
  const days = ["30", "31", "1", "2", "3", "4", "5", "6", "7", "8", "9", "10", "11", "12", "13"];
  const step = (opts.end - opts.start) / (days.length - 1);
  const at = i => opts.start + i * step;
  days.forEach((d, i) => add(svg, "text", { x: at(i), y: 113, "text-anchor": "middle" }, d));
  add(svg, "text", { x: at(0.5), y: 125, "text-anchor": "middle" }, "março");
  add(svg, "text", { x: at(8), y: 125, "text-anchor": "middle" }, "abril");
  [-0.5, 1.5].forEach(i => add(svg, "path", { class: "grid", d: `M${Math.round(at(i))}.5 103V130` }));
  add(svg, "polyline", { class: "trend", points: opts.values.map((v, i) => `${at(i)},${v}`).join(" ") });
}

function barChart(id, opts) {
  const svg = document.getElementById(id);
  gridLines(svg, opts);
  opts.bars.forEach(([label, top], i) => {
    const x = opts.start + i * opts.step;
    add(svg, "rect", { class: "bar", x, y: top, width: opts.width, height: opts.base - top });
    add(svg, "text", { x: x + opts.width / 2, y: opts.base + 11, "text-anchor": "middle" }, label);
  });
}

lineChart("qty-line", {
  left: 33, right: 287, start: 40, end: 280,
  ticks: [["10 Mil", 7], ["5 Mil", 55], ["0 Mil", 102]],
  values: [24, 39, 46, 39, 48, 57, 35, 25, 32, 42, 52, 69, 82, 82, 95]
});
lineChart("rev-line", {
  left: 42, right: 287, start: 49, end: 280,
  ticks: [["R$ 10 Mi", 7], ["R$ 5 Mi", 55], ["R$ 0 Mi", 102]],
  values: [41, 51, 54, 45, 48, 61, 42, 19, 32, 46, 54, 69, 84, 84, 95]
});
barChart("qty-bar", {
  left: 32, right: 290, start: 55, step: 56, width: 43, base: 116,
  ticks: [["20 Mil", 7], ["15 Mil", 34], ["10 Mil", 61], ["5 Mil", 88], ["0 Mil", 116]],
  bars: [["Mobile", 7], ["Internet", 7], ["Aplicativo", 7], ["Mobil", 115]]
});
barChart("rev-bar", {
  left: 42, right: 291, start: 64, step: 54, width: 42, base: 116,
  ticks: [["R$ 20 Mi", 28], ["R$ 10 Mi", 72], ["R$ 0 Mi", 115]],
  bars: [["Internet", 6], ["Mobile", 15], ["Aplicativo", 17], ["Mobil", 115]]
});
```
